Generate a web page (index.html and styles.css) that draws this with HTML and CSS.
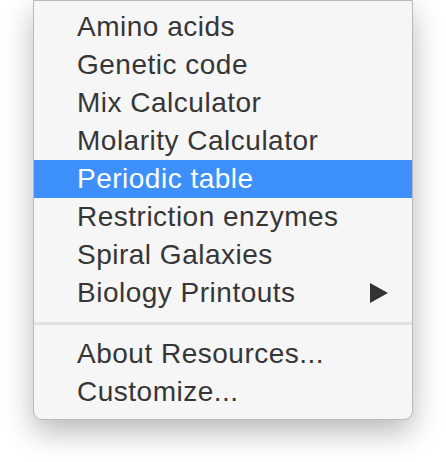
FILE: index.html
```html
<!DOCTYPE html>
<html>
<head>
<meta charset="utf-8">
<link rel="stylesheet" href="styles.css">
</head>
<body>
<div class="menu">
  <div class="item">Amino acids</div>
  <div class="item">Genetic code</div>
  <div class="item">Mix Calculator</div>
  <div class="item">Molarity Calculator</div>
  <div class="item active">Periodic table</div>
  <div class="item">Restriction enzymes</div>
  <div class="item">Spiral Galaxies</div>
  <div class="item sub"><span>Biology Printouts</span><span class="arrow"></span></div>
  <div class="sep"></div>
  <div class="item">About Resources...</div>
  <div class="item">Customize...</div>
</div>
</body>
</html>
```
FILE: styles.css
```css
html, body {
  margin: 0;
  padding: 0;
  background: #ffffff;
}
body {
  width: 446px;
  height: 462px;
  overflow: hidden;
}
.menu {
  margin-left: 33px;
  width: 378px;
  padding: 7px 0 8px;
  background: #f6f6f6;
  border: 1px solid #b9b9b9;
  border-radius: 0 0 9px 9px;
  box-shadow: 0 12px 30px rgba(0, 0, 0, 0.28);
  font-family: "Liberation Sans", Arial, sans-serif;
  font-size: 28px;
  color: #363636;
}
.item {
  height: 38px;
  line-height: 38px;
  padding: 0 24px 0 43px;
  letter-spacing: 0.5px;
  white-space: nowrap;
}
.item.active {
  background: #3d90fa;
  color: #ffffff;
}
.sub {
  display: flex;
  align-items: center;
  justify-content: space-between;
}
.arrow {
  width: 0;
  height: 0;
  border-top: 10px solid transparent;
  border-bottom: 10px solid transparent;
  border-left: 18px solid #333333;
}
.sep {
  height: 3px;
  margin: 10px 0;
  background: #e2e2e2;
}
```
